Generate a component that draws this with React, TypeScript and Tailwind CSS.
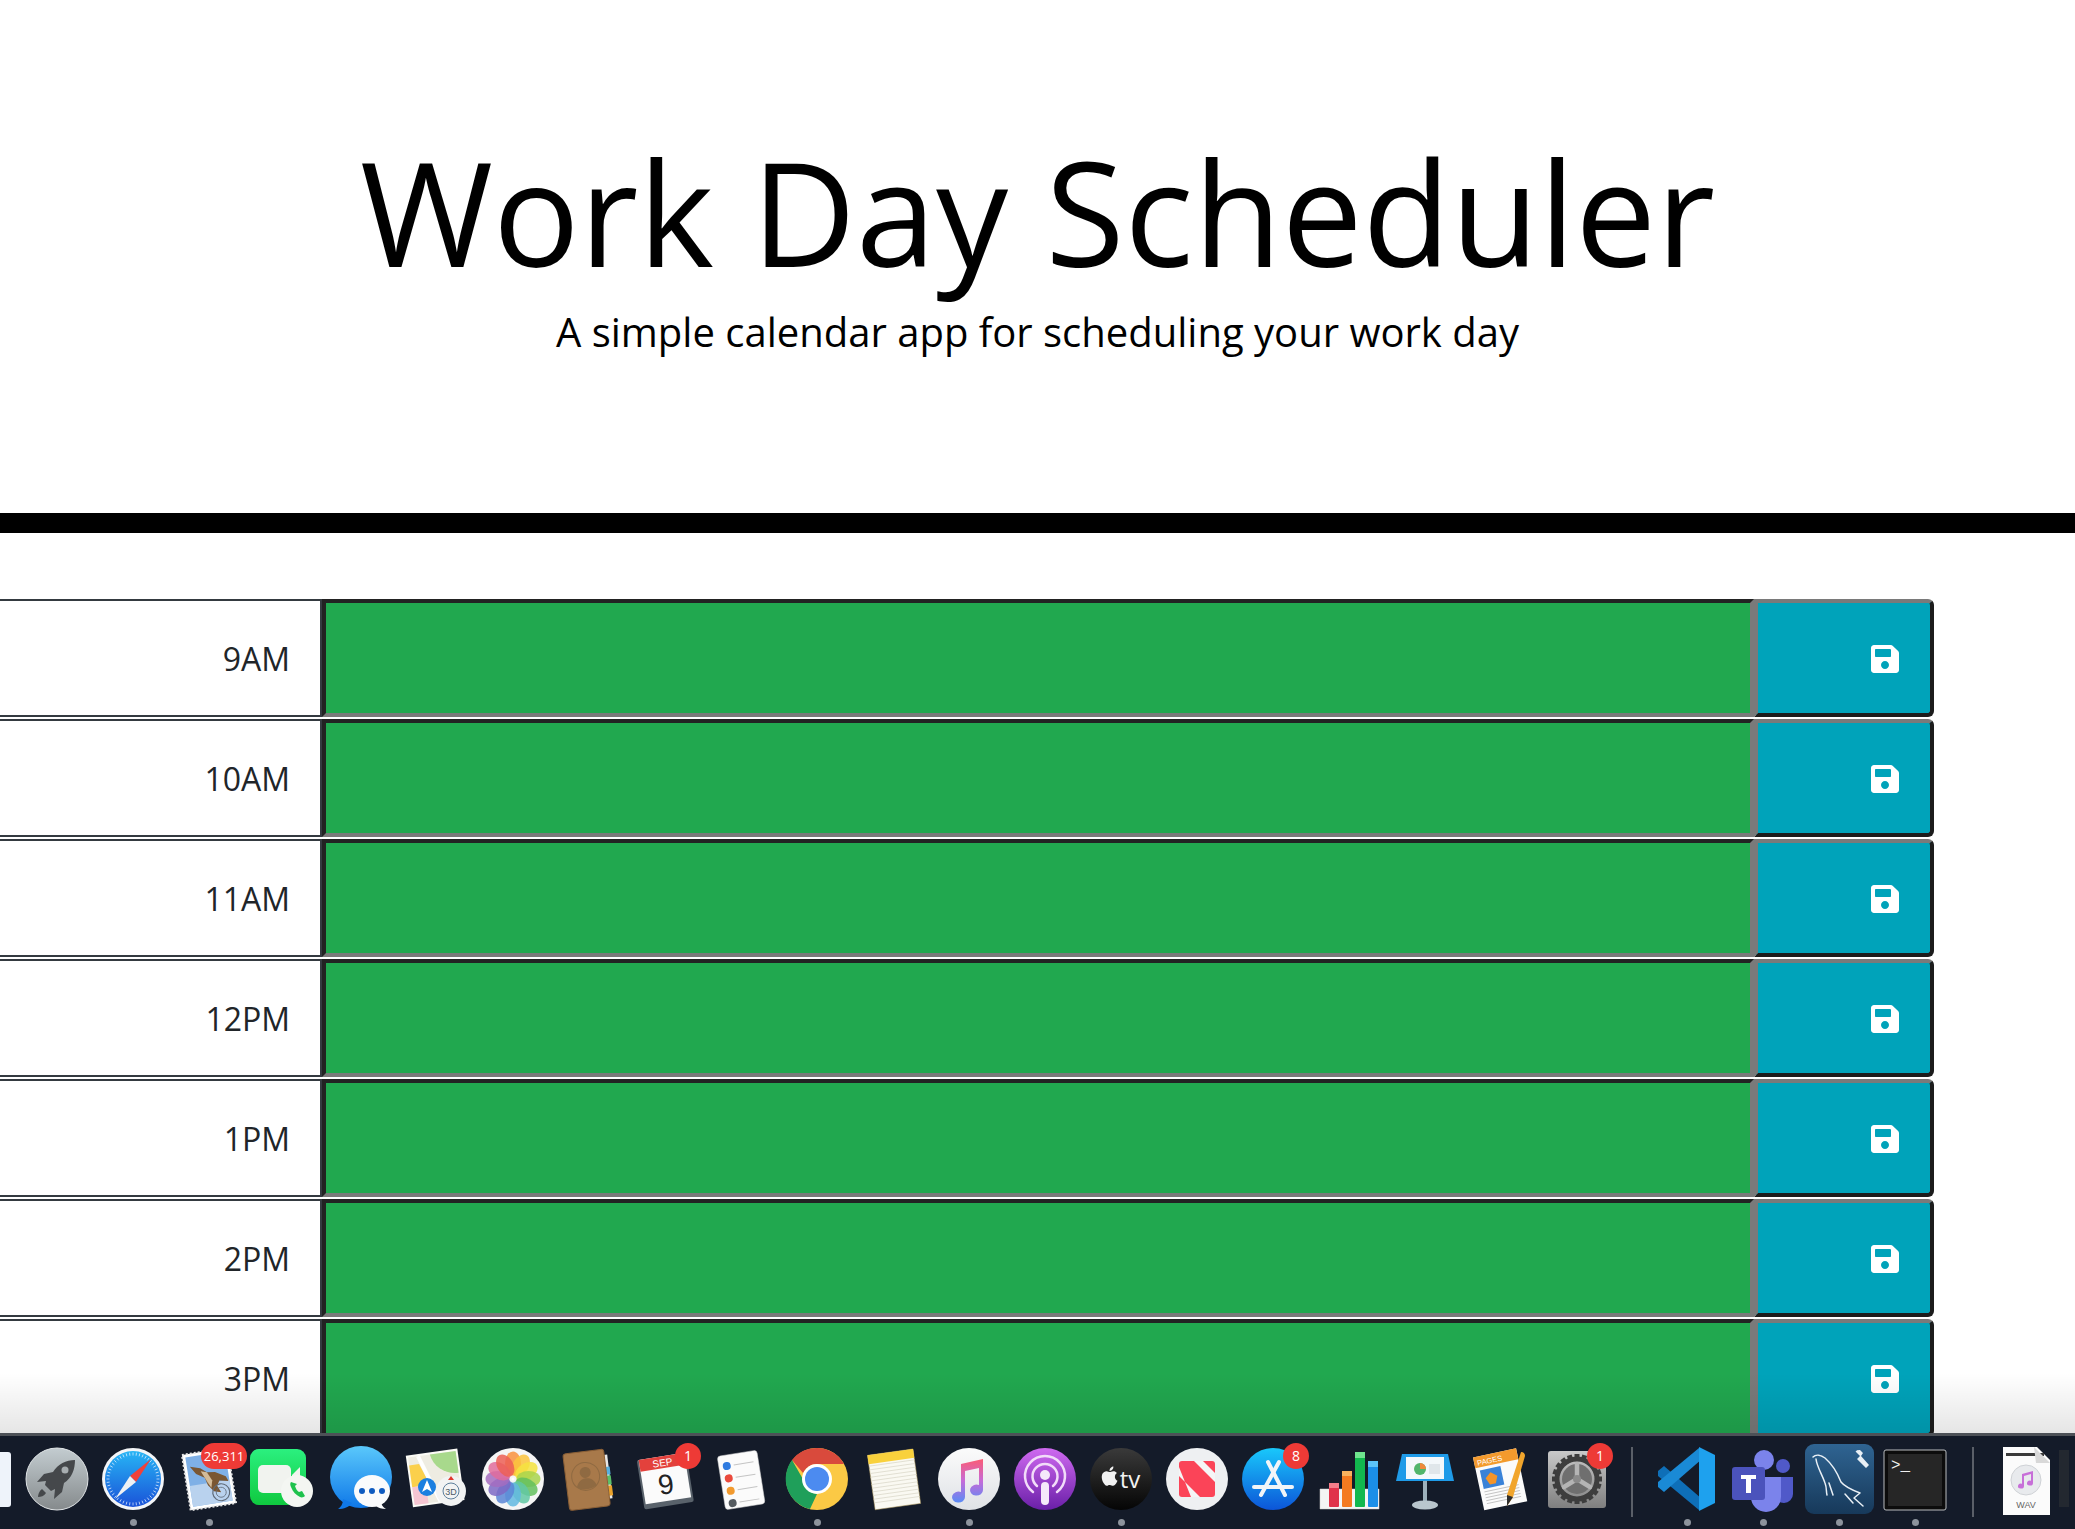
import { FaSave } from "react-icons/fa";

const hours = ["9AM", "10AM", "11AM", "12PM", "1PM", "2PM", "3PM"];

const APPLE =
  "M23.6 17.2c0-3 2.5-4.500 2.600-4.600-1.400-2.100-3.600-2.400-4.400-2.400-1.900-.2-3.600 1.100-4.600 1.100-.9 0-2.400-1.100-4-1.100-2 0-3.900 1.200-5 3-2.100 3.700-.5 9.200 1.500 12.200 1 1.500 2.200 3.100 3.800 3 1.500-.1 2.100-1 3.900-1 1.800 0 2.400 1 4 1 1.600 0 2.700-1.500 3.700-2.900 1.200-1.700 1.600-3.300 1.700-3.400-.1 0-3.200-1.200-3.200-4.900zM20.500 8.200c.8-1 1.400-2.400 1.200-3.800-1.200 0-2.700.8-3.500 1.800-.8.900-1.400 2.300-1.300 3.700 1.400.1 2.800-.7 3.600-1.700z";

function Icon({ children }: { children: React.ReactNode }) {
  return (
    <svg viewBox="0 0 64 64" className="w-16 h-16 block overflow-visible">
      {children}
    </svg>
  );
}

function Launchpad() {
  return (
    <Icon>
      <defs>
        <linearGradient id="lp" x1="0" y1="0" x2="0" y2="1">
          <stop offset="0" stopColor="#c3ccd0" />
          <stop offset="1" stopColor="#858a8c" />
        </linearGradient>
      </defs>
      <circle cx="32" cy="32" r="31" fill="url(#lp)" stroke="#dfe3e5" strokeWidth="1" />
      <path
        d="M50 13c-9 0-17 4-22 12l-9 2-7 8 9-1-1 4 6 6 4-2-1 10 8-7 2-9c8-5 11-14 11-23z"
        fill="#45484b"
      />
      <path d="M17 42c-3 2-4 6-4 8 3 0 6-1 8-4z" fill="#45484b" />
      <circle cx="40" cy="23" r="3.500" fill="#a7adb0" />
    </Icon>
  );
}

function Safari() {
  const ticks = Array.from({ length: 48 }, (_, i) => i * 7.5);
  return (
    <Icon>
      <defs>
        <linearGradient id="sf" x1="0" y1="0" x2="0" y2="1">
          <stop offset="0" stopColor="#27b5f5" />
          <stop offset="1" stopColor="#1a52d8" />
        </linearGradient>
      </defs>
      <circle cx="32" cy="32" r="31" fill="#f3f5f7" />
      <circle cx="32" cy="32" r="28" fill="url(#sf)" />
      {ticks.map((a) => (
        <line
          key={a}
          x1="32"
          y1="5.500"
          x2="32"
          y2="8.500"
          stroke="#e6f2ff"
          strokeWidth="0.7"
          transform={`rotate(${a} 32 32)`}
        />
      ))}
      <polygon points="50,12 35,35 29,29" fill="#f0413a" />
      <polygon points="14,52 35,35 29,29" fill="#eef1f4" />
    </Icon>
  );
}

function Mail() {
  return (
    <Icon>
      <g transform="rotate(-9 32 32)">
        <rect x="9" y="4" width="46" height="56" fill="#fff" stroke="#e4e4e4" strokeDasharray="2 2" strokeWidth="2" />
        <rect x="12" y="7" width="40" height="50" fill="#7fb0e6" />
        <rect x="12" y="36" width="40" height="21" fill="#b9d2ee" />
        {/* hawk, wings spread across the stamp */}
        <path d="M15 17l10 3 6 5 8 1 10 6 2 5-9-2-3 5 3 7-7-2-5-7-2-8-8-5z" fill="#7a5733" />
        <path d="M25 23l6 2 4 9-2 7-3-6z" fill="#d3bb98" />
        <circle cx="42" cy="47" r="8.500" fill="none" stroke="#5f6a78" strokeWidth="1.200" />
        <circle cx="42" cy="47" r="5" fill="none" stroke="#5f6a78" strokeWidth="0.800" />
      </g>
    </Icon>
  );
}

function FaceTime() {
  return (
    <Icon>
      <defs>
        <linearGradient id="ft" x1="0" y1="0" x2="0" y2="1">
          <stop offset="0" stopColor="#2bf07f" />
          <stop offset="1" stopColor="#0fc93f" />
        </linearGradient>
      </defs>
      <rect x="-3" y="2" width="56" height="56" rx="9" fill="url(#ft)" />
      <rect x="5" y="18" width="33" height="28" rx="5" fill="#f1f3ef" />
      <polygon points="39,28 47,20 47,44 39,36" fill="#f1f3ef" />
      <circle cx="44" cy="44" r="16" fill="#f4f6f2" />
      <path
        d="M38 35c-1 1-1 3 0 5 2 5 5 8 9 10 2 1 4 0 5-1l-3-5-3 1c-2-1-3-3-4-6l2-2z"
        fill="#1fc24d"
      />
    </Icon>
  );
}

function Messages() {
  return (
    <Icon>
      <defs>
        <linearGradient id="ms" x1="0" y1="0" x2="0" y2="1">
          <stop offset="0" stopColor="#5ac8fb" />
          <stop offset="1" stopColor="#0f78e8" />
        </linearGradient>
      </defs>
      <circle cx="32" cy="30" r="31" fill="url(#ms)" />
      <path d="M14 52c0 5-2 8-5 10 6 0 11-2 14-6z" fill="#0f78e8" />
      <ellipse cx="43" cy="44" rx="18" ry="16" fill="#fafbfc" />
      <path d="M52 56c1 3 3 5 5 6-4 0-8-1-10-3z" fill="#fafbfc" />
      <circle cx="33" cy="44" r="3" fill="#0f5bc0" />
      <circle cx="43" cy="44" r="3" fill="#0f5bc0" />
      <circle cx="53" cy="44" r="3" fill="#0f5bc0" />
    </Icon>
  );
}

function Maps() {
  return (
    <Icon>
      <g transform="rotate(-8 30 30)">
        <rect x="4" y="5" width="52" height="52" fill="#fbfbf6" />
        <rect x="6" y="7" width="48" height="48" fill="#eeece2" />
        <path d="M28 7h26v22c-12 0-24-8-26-22z" fill="#a8d98c" />
        <path d="M6 15h10l8 22H6z" fill="#fbd04c" />
        <path d="M6 37h14v18H6z" fill="#f6c6d2" />
        <path d="M16 7l16 48" stroke="#fff" strokeWidth="4" />
      </g>
      <circle cx="22" cy="40" r="9" fill="#1b7fe0" />
      <polygon points="22,33 27,45 22,42 17,45" fill="#fff" />
      <circle cx="46" cy="44" r="15" fill="#f2f3f3" />
      <circle cx="46" cy="44" r="8" fill="none" stroke="#5d7f9c" strokeWidth="1" />
      <text x="46" y="47.500" textAnchor="middle" fontSize="9" fill="#4a5a68" fontFamily="Liberation Sans, sans-serif">
        3D
      </text>
      <polygon points="46,29 49,33 43,33" fill="#e0382e" />
    </Icon>
  );
}

function Photos() {
  const colors = ["#f9913c", "#fbc33c", "#f4e33f", "#a8d34c", "#63bf5d", "#62c8a3", "#62b8e0", "#5a86d6", "#7c69c4", "#a56cc0", "#e06c9c", "#ec5f55"];
  return (
    <Icon>
      <circle cx="32" cy="32" r="31" fill="#f5f5f5" />
      {colors.map((c, i) => (
        <ellipse
          key={c}
          cx="32"
          cy="16.500"
          rx="8"
          ry="12"
          fill={c}
          opacity="0.85"
          transform={`rotate(${i * 30} 32 32)`}
        />
      ))}
      <circle cx="32" cy="32" r="1.500" fill="#fff" />
    </Icon>
  );
}

function Contacts() {
  return (
    <Icon>
      <g transform="rotate(-7 32 32)">
        <rect x="45" y="10" width="8" height="44" fill="#e8e8e8" />
        <rect x="50" y="22" width="4" height="8" fill="#58b0e0" />
        <rect x="50" y="31" width="4" height="9" fill="#5cc069" />
        <rect x="50" y="41" width="4" height="10" fill="#e9a22b" />
        <rect x="9" y="4" width="41" height="57" rx="3" fill="#a8794a" />
        <rect x="9" y="4" width="41" height="57" rx="3" fill="none" stroke="#8a5f36" strokeWidth="1" />
        <circle cx="29" cy="29" r="14" fill="none" stroke="#8f6a42" strokeWidth="1" />
        <circle cx="29" cy="25" r="5.500" fill="#8f6a42" />
        <path d="M19 39c2-6 6-8 10-8s8 2 10 8c-5 4-15 4-20 0z" fill="#8f6a42" />
      </g>
    </Icon>
  );
}

function Calendar() {
  return (
    <Icon>
      <g transform="rotate(-9 32 32)">
        <rect x="7" y="9" width="50" height="50" rx="2" fill="#59626b" />
        <rect x="9" y="9" width="46" height="45" fill="#fbfbfb" />
        <rect x="9" y="9" width="46" height="12" fill="#e3413c" />
        <text x="32" y="19" textAnchor="middle" fontSize="10" fill="#fff" fontFamily="Liberation Sans, sans-serif">
          SEP
        </text>
        <text x="32" y="47" textAnchor="middle" fontSize="28" fill="#222" fontFamily="Liberation Sans, sans-serif">
          9
        </text>
      </g>
    </Icon>
  );
}

function Reminders() {
  const dots = ["#2f7be0", "#ea4a3c", "#f29a2e", "#555b60"];
  return (
    <Icon>
      <g transform="rotate(-9 32 32)">
        <rect x="12" y="6" width="40" height="54" rx="3" fill="#fbfbfb" stroke="#d5d5d5" strokeWidth="0.500" />
        {dots.map((c, i) => (
          <g key={c}>
            <circle cx="20" cy={17 + i * 12.500} r="4" fill={c} />
            <line x1="27" x2="47" y1={17 + i * 12.500} y2={17 + i * 12.500} stroke="#c4c4c4" strokeWidth="1" />
          </g>
        ))}
      </g>
    </Icon>
  );
}

function Chrome() {
  return (
    <Icon>
      <circle cx="32" cy="32" r="31" fill="#fbc945" />
      <path d="M32 1a31 31 0 0 1 27 16H32a15 15 0 0 0-14 9L7 13A31 31 0 0 1 32 1z" fill="#d94a3c" />
      <path d="M7 13l12 21a15 15 0 0 0 13 13l-7 15A31 31 0 0 1 7 13z" fill="#1f9f5a" />
      <circle cx="32" cy="32" r="15" fill="#fff" />
      <circle cx="32" cy="32" r="12" fill="#4c8bf0" />
    </Icon>
  );
}

function Notes() {
  const lines = Array.from({ length: 11 }, (_, i) => 16 + i * 3.700);
  return (
    <Icon>
      <g transform="rotate(-8 32 32)">
        <rect x="10" y="5" width="46" height="55" fill="#faf9f2" stroke="#a68f52" strokeWidth="0.500" />
        <rect x="10" y="5" width="46" height="9" fill="#f9d13c" />
        {lines.map((y) => (
          <line key={y} x1="10" x2="56" y1={y} y2={y} stroke="#d9d6c8" strokeWidth="0.700" />
        ))}
      </g>
    </Icon>
  );
}

function Music() {
  return (
    <Icon>
      <defs>
        <linearGradient id="mu" x1="0" y1="0" x2="0" y2="1">
          <stop offset="0" stopColor="#fb5c74" />
          <stop offset="0.5" stopColor="#c66bd8" />
          <stop offset="1" stopColor="#5a8cf5" />
        </linearGradient>
        <linearGradient id="mb" x1="0" y1="0" x2="0" y2="1">
          <stop offset="0" stopColor="#fbfbfb" />
          <stop offset="1" stopColor="#dfe2e6" />
        </linearGradient>
      </defs>
      <circle cx="32" cy="32" r="31" fill="url(#mb)" />
      <path
        d="M24 17l22-5v31a6.500 5.500 0 1 1-4-5V21l-14 3v26a6.500 5.500 0 1 1-4-5z"
        fill="url(#mu)"
      />
    </Icon>
  );
}

function Podcasts() {
  return (
    <Icon>
      <defs>
        <linearGradient id="pc" x1="0" y1="0" x2="0" y2="1">
          <stop offset="0" stopColor="#cf6af0" />
          <stop offset="1" stopColor="#6a1fa8" />
        </linearGradient>
      </defs>
      <circle cx="32" cy="32" r="31" fill="url(#pc)" />
      <path d="M20 45a20 20 0 1 1 24 0" fill="none" stroke="#f2dcf9" strokeWidth="2.500" strokeLinecap="round" />
      <path d="M24 39a12.500 12.500 0 1 1 16 0" fill="none" stroke="#f2dcf9" strokeWidth="2.500" strokeLinecap="round" />
      <circle cx="32" cy="28" r="5" fill="#f5e8fa" />
      <rect x="28" y="35" width="8" height="23" rx="4" fill="#f5e8fa" />
    </Icon>
  );
}

function AppleTv() {
  return (
    <Icon>
      <defs>
        <linearGradient id="tv" x1="0" y1="0" x2="0" y2="1">
          <stop offset="0" stopColor="#3a3a3a" />
          <stop offset="1" stopColor="#050505" />
        </linearGradient>
      </defs>
      <circle cx="32" cy="32" r="31" fill="url(#tv)" />
      <g transform="translate(7 16) scale(0.8)">
        <path d={APPLE} fill="#f2f2f2" />
      </g>
      <text x="41" y="41" textAnchor="middle" fontSize="24" fill="#f2f2f2" fontFamily="Open Sans, sans-serif">
        tv
      </text>
    </Icon>
  );
}

function News() {
  return (
    <Icon>
      <circle cx="32" cy="32" r="31" fill="#eef0f2" />
      <rect x="14" y="14" width="36" height="36" rx="3" fill="#fb4458" />
      <polygon points="14,20 14,29 35,50 26,50" fill="#f5f5f6" />
      <polygon points="29,14 38,14 50,26 50,35" fill="#f5f5f6" />
    </Icon>
  );
}

function AppStore() {
  return (
    <Icon>
      <defs>
        <linearGradient id="as" x1="0" y1="0" x2="0" y2="1">
          <stop offset="0" stopColor="#19c8fb" />
          <stop offset="1" stopColor="#0c55d8" />
        </linearGradient>
      </defs>
      <circle cx="32" cy="32" r="31" fill="url(#as)" />
      <g stroke="#f2f5f8" strokeWidth="4" strokeLinecap="round">
        <line x1="38" y1="15" x2="20" y2="48" />
        <line x1="27" y1="15" x2="44" y2="48" />
        <line x1="13" y1="40" x2="51" y2="40" />
      </g>
    </Icon>
  );
}

function Numbers() {
  return (
    <Icon>
      <path d="M3 42h59v20H3z" fill="#f4f4f4" stroke="#cfcfcf" strokeWidth="0.500" />
      <rect x="12" y="36" width="10" height="24" rx="1" fill="#e0324a" />
      <rect x="12" y="36" width="10" height="5" fill="#f47e8a" />
      <rect x="25" y="24" width="10" height="36" rx="1" fill="#f47a20" />
      <rect x="25" y="24" width="10" height="5" fill="#f9b25e" />
      <rect x="38" y="5" width="10" height="55" rx="1" fill="#12b84e" />
      <rect x="38" y="5" width="10" height="6" fill="#6fe58f" />
      <rect x="51" y="14" width="10" height="46" rx="1" fill="#1b8fe8" />
      <rect x="51" y="14" width="10" height="6" fill="#5cc4f8" />
    </Icon>
  );
}

function Keynote() {
  return (
    <Icon>
      <polygon points="9,7 55,7 61,34 3,34" fill="#1f9be8" />
      <rect x="13" y="10" width="38" height="22" fill="#f4f8fb" />
      <circle cx="27" cy="22" r="6" fill="#52b56b" />
      <path d="M27 22V16a6 6 0 0 1 6 6z" fill="#f08a3c" />
      <rect x="36" y="17" width="11" height="10" fill="#e0e6ea" />
      <rect x="30" y="34" width="4" height="21" fill="#9db0bb" />
      <ellipse cx="32" cy="58" rx="13" ry="4.500" fill="#b9c6cd" />
    </Icon>
  );
}

function Pages() {
  return (
    <Icon>
      <g transform="rotate(-12 28 32)">
        <rect x="9" y="6" width="44" height="54" fill="#fbfbfb" />
        <rect x="9" y="6" width="44" height="11" fill="#f39a2d" />
        <text x="12" y="15" fontSize="7.500" fill="#fff" fontFamily="Liberation Sans, sans-serif">
          PAGES
        </text>
        <rect x="13" y="20" width="21" height="19" fill="#3a82d8" />
        <path d="M23 24l6 5-3 7h-6l-3-7z" fill="#f59428" />
        {[42, 45, 48, 51, 54].map((y) => (
          <line key={y} x1="13" x2="48" y1={y} y2={y} stroke="#bbbbbb" strokeWidth="0.800" />
        ))}
      </g>
      <path d="M52 5c3 0 4 2 4 4L44 50l-6 9 0-11z" fill="#f1a52c" />
      <path d="M38 48l6 2-6 9z" fill="#2e2e2e" />
    </Icon>
  );
}

function Prefs() {
  const teeth = Array.from({ length: 20 }, (_, i) => i * 18);
  return (
    <Icon>
      <defs>
        <linearGradient id="sp" x1="0" y1="0" x2="0" y2="1">
          <stop offset="0" stopColor="#c9c9c9" />
          <stop offset="1" stopColor="#7f7f7f" />
        </linearGradient>
      </defs>
      <rect x="3" y="4" width="58" height="57" rx="3" fill="url(#sp)" />
      <g fill="#3d3d3d">
        {teeth.map((a) => (
          <rect key={a} x="29.500" y="7" width="5" height="7" transform={`rotate(${a} 32 32)`} />
        ))}
      </g>
      <circle cx="32" cy="32" r="20" fill="none" stroke="#3d3d3d" strokeWidth="5" />
      <circle cx="32" cy="32" r="15" fill="#6f6f6f" />
      <g stroke="#b4b4b4" strokeWidth="4.500" strokeLinecap="round">
        <line x1="32" y1="32" x2="32" y2="17" />
        <line x1="32" y1="32" x2="19" y2="40" />
        <line x1="32" y1="32" x2="45" y2="40" />
      </g>
      <circle cx="32" cy="32" r="4" fill="#8a8a8a" />
    </Icon>
  );
}

function VSCode() {
  return (
    <Icon>
      <path d="M3 24l6-5 38 33-3 11L3 29z" fill="#0e6fb8" />
      <path d="M3 40l6 5 38-33-3-11L3 35z" fill="#1a8ad6" />
      <path d="M44 0l16 8v48l-16 8z" fill="#1ea1ee" />
    </Icon>
  );
}

function Teams() {
  return (
    <Icon>
      <circle cx="33" cy="13" r="10" fill="#7b83eb" />
      <circle cx="52" cy="19" r="7" fill="#5059c9" />
      <path d="M44 30h18v17a9 9 0 0 1-18 0z" fill="#5059c9" />
      <path d="M20 30h30v20a15 15 0 0 1-30 0z" fill="#7b83eb" />
      <rect x="1" y="20" width="33" height="33" rx="3" fill="#4b53bc" />
      <path d="M10 28h15v4h-5v14h-5V32h-5z" fill="#fff" />
    </Icon>
  );
}

function Workbench() {
  return (
    <Icon>
      <defs>
        <linearGradient id="wb" x1="0" y1="0" x2="0" y2="1">
          <stop offset="0" stopColor="#2f6492" />
          <stop offset="1" stopColor="#17395a" />
        </linearGradient>
      </defs>
      <rect x="-2" y="-3" width="69" height="70" rx="9" fill="url(#wb)" />
      <path
        d="M6 10c3-3 8-2 12 1 7 6 12 14 16 24 4 5 11 8 19 11l-6 5 9 8M9 12c1 8 6 15 9 24 2 5 1 9 2 12M22 36l4 12M38 47l8 9"
        fill="none"
        stroke="#e9f0f6"
        strokeWidth="1.500"
        strokeLinecap="round"
        strokeLinejoin="round"
      />
      <path d="M49 5l4 4-3 3 9 9 3-3-8-9 2-3-3-3c-3 0-5 1-4 2z" fill="#e9f0f6" />
    </Icon>
  );
}

function Terminal() {
  return (
    <Icon>
      <rect x="1" y="3" width="62" height="60" rx="2" fill="#0c0c0c" stroke="#b9bcbe" strokeWidth="1" />
      <rect x="5" y="7" width="54" height="52" fill="#262626" />
      <text x="8" y="23" fontSize="16" fill="#f0f0f0" fontFamily="Liberation Mono, monospace">
        {">_"}
      </text>
    </Icon>
  );
}

function WavFile() {
  return (
    <Icon>
      <path d="M9 0h34l13 13v55H9z" fill="#fbfbfb" />
      <rect x="12" y="6" width="38" height="3" fill="#3a3a3a" />
      <path d="M40 0l16 16H42z" fill="#d8d8d8" />
      <circle cx="32" cy="33" r="15" fill="#e8eaed" stroke="#cfd2d6" strokeWidth="1" />
      <path d="M28 27l11-3v12a3 2.500 0 1 1-2-2.300V27l-7 2v10a3 2.500 0 1 1-2-2.300z" fill="#c76fd8" />
      <text x="32" y="61" textAnchor="middle" fontSize="9" fill="#666" fontFamily="Liberation Sans, sans-serif">
        WAV
      </text>
    </Icon>
  );
}

function DockItem({
  children,
  badge,
  running,
}: {
  children: React.ReactNode;
  badge?: string;
  running?: boolean;
}) {
  return (
    <div className="relative w-[76px] shrink-0 flex flex-col items-center">
      {children}
      {badge && (
        <span
          className={
            badge.length > 1
              ? "absolute top-[-4px] left-[30px] w-[46px] h-[26px] rounded-full bg-[#ee3a36] text-white text-[13px] leading-[26px] text-center font-['Open_Sans',sans-serif]"
              : "absolute top-[-4px] left-[48px] w-[26px] h-[26px] rounded-full bg-[#ee3a36] text-white text-[14px] leading-[26px] text-center font-['Open_Sans',sans-serif]"
          }
        >
          {badge}
        </span>
      )}
      {running && (
        <span className="absolute top-[72px] w-[7px] h-[7px] rounded-full bg-[#8d939c]" />
      )}
    </div>
  );
}

function Dock() {
  return (
    <div className="absolute left-0 right-0 bottom-0 h-[96px] bg-[#141b29] border-t-[3px] border-t-[#4d5157] flex items-start pt-[11px] overflow-hidden">
      <div className="w-[19px] shrink-0 pt-[5px]">
        <div className="w-[11px] h-[55px] bg-[#eef3fa] rounded-r-[3px]" />
      </div>
      <DockItem><Launchpad /></DockItem>
      <DockItem running><Safari /></DockItem>
      <DockItem running badge="26,311"><Mail /></DockItem>
      <DockItem><FaceTime /></DockItem>
      <DockItem><Messages /></DockItem>
      <DockItem><Maps /></DockItem>
      <DockItem><Photos /></DockItem>
      <DockItem><Contacts /></DockItem>
      <DockItem badge="1"><Calendar /></DockItem>
      <DockItem><Reminders /></DockItem>
      <DockItem running><Chrome /></DockItem>
      <DockItem><Notes /></DockItem>
      <DockItem running><Music /></DockItem>
      <DockItem><Podcasts /></DockItem>
      <DockItem running><AppleTv /></DockItem>
      <DockItem><News /></DockItem>
      <DockItem badge="8"><AppStore /></DockItem>
      <DockItem><Numbers /></DockItem>
      <DockItem><Keynote /></DockItem>
      <DockItem><Pages /></DockItem>
      <DockItem badge="1"><Prefs /></DockItem>
      <div className="w-[34px] shrink-0 flex justify-center">
        <div className="w-[2px] h-[70px] bg-[#5a5f68]" />
      </div>
      <DockItem running><VSCode /></DockItem>
      <DockItem running><Teams /></DockItem>
      <DockItem running><Workbench /></DockItem>
      <DockItem running><Terminal /></DockItem>
      <div className="w-[40px] shrink-0 flex justify-center">
        <div className="w-[2px] h-[70px] bg-[#5a5f68]" />
      </div>
      <div className="w-[66px] shrink-0 flex justify-center">
        <WavFile />
      </div>
      <div className="mt-[3px] w-[10px] h-[57px] shrink-0 bg-[#232830]" />
    </div>
  );
}

function TimeRow({ hour }: { hour: string }) {
  return (
    <div className="flex w-[1934px] h-[118px] mb-[2px]">
      <div className="w-[322px] shrink-0 border-y-2 border-r-2 border-[#343a40] bg-white flex items-center justify-end pr-[30px] pt-[2px] text-[32px] text-[#212529]">
        {hour}
      </div>
      <textarea className="flex-1 resize-none bg-[#21a84f] border-4 border-t-[#222222] border-l-[#222222] border-b-[#7a7a7a] border-r-[#7a7a7a] outline-none" />
      <button className="w-[180px] shrink-0 flex items-center justify-end pr-[29px] pt-[2px] bg-[#00a3ba] text-white border-4 border-t-[#7a7a7a] border-l-[#7a7a7a] border-b-[#1c1c1c] border-r-[#1c1c1c] rounded-r-[6px]">
        <FaSave className="w-8 h-8" />
      </button>
    </div>
  );
}

export default function App() {
  return (
    <div className="relative h-screen overflow-hidden bg-white font-['Open_Sans',sans-serif] text-black">
      <header className="h-[513px] pt-[139px] text-center">
        <h1 className="text-[144px] leading-none font-normal">Work Day Scheduler</h1>
        <p className="mt-[29px] text-[40px] leading-none">
          A simple calendar app for scheduling your work day
        </p>
      </header>
      <div className="h-5 bg-black" />
      <main className="pt-[66px]">
        {hours.map((hour) => (
          <TimeRow key={hour} hour={hour} />
        ))}
      </main>
      {/* dock blur bleeding up onto the page */}
      <div className="absolute left-0 right-0 bottom-[96px] h-[60px] bg-gradient-to-b from-transparent to-black/10 pointer-events-none" />
      <Dock />
    </div>
  );
}
